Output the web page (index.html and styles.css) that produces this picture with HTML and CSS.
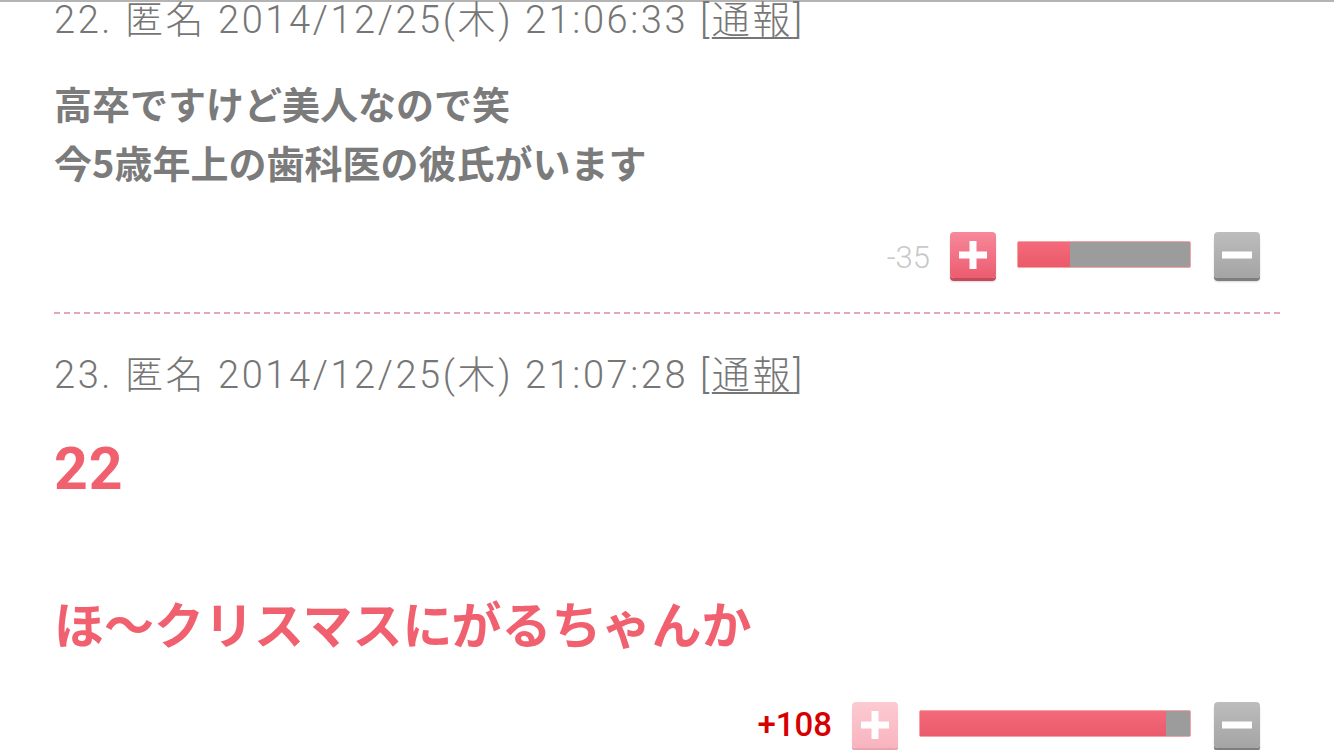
FILE: index.html
```html
<!DOCTYPE html>
<html lang="ja">
<head>
<meta charset="utf-8">
<title>コメント</title>
<link rel="stylesheet" href="styles.css">
</head>
<body>
<div class="topline"></div>
<div class="thread">
  <div class="comment">
    <div class="meta">22. 匿名 2014/12/25(木) 21:06:33 <span class="report">[<u>通報</u>]</span></div>
    <div class="body body-gray">高卒ですけど美人なので笑<br>今5歳年上の歯科医の彼氏がいます</div>
    <div class="vote">
      <span class="score score-minus">-35</span>
      <span class="btn btn-plus"><svg viewBox="0 0 30 30" width="30" height="30"><rect x="11.5" y="1" width="7" height="28" fill="#fff"/><rect x="1" y="11.5" width="28" height="7" fill="#fff"/></svg></span>
      <span class="bar" style="width:174px"><span class="fill" style="width:30%"></span></span>
      <span class="btn btn-minus"><svg viewBox="0 0 30 30" width="30" height="30"><rect x="0" y="11.5" width="30" height="7" fill="#fff"/></svg></span>
    </div>
  </div>
  <div class="comment">
    <div class="meta">23. 匿名 2014/12/25(木) 21:07:28 <span class="report">[<u>通報</u>]</span></div>
    <div class="body body-red"><span class="anchor">22</span><br><br>ほ〜クリスマスにがるちゃんか</div>
    <div class="vote">
      <span class="score score-plus">+108</span>
      <span class="btn btn-plus btn-voted"><svg viewBox="0 0 30 30" width="30" height="30"><rect x="11.5" y="1" width="7" height="28" fill="#fff"/><rect x="1" y="11.5" width="28" height="7" fill="#fff"/></svg></span>
      <span class="bar" style="width:272px"><span class="fill" style="width:91%"></span></span>
      <span class="btn btn-minus"><svg viewBox="0 0 30 30" width="30" height="30"><rect x="0" y="11.5" width="30" height="7" fill="#fff"/></svg></span>
    </div>
  </div>
</div>
</body>
</html>
```

FILE: styles.css
```css
html, body {
  margin: 0;
  padding: 0;
  background: #fff;
}
body {
  width: 1334px;
  height: 750px;
  overflow: hidden;
  font-family: "Noto Sans CJK JP", "Noto Sans", sans-serif;
}
.topline {
  height: 2px;
  background: #b4b4b4;
}
.thread {
  margin: 0 54px;
}
.comment {
  padding: 43px 0 32px;
  border-bottom: 2px dashed #e8a3c0;
}
.comment:first-child {
  padding-top: 0;
}
.meta {
  font-family: Roboto, "Noto Sans CJK JP", sans-serif;
  font-size: 38px;
  line-height: 36px;
  font-weight: 300;
  color: #767676;
  white-space: nowrap;
  letter-spacing: 2.6px;
}
.report u {
  text-decoration-thickness: 2px;
  text-underline-offset: 4px;
}
.body {
  margin-top: 36px;
  font-weight: 700;
  line-height: 1.55;
  white-space: nowrap;
}
.body-gray {
  font-size: 38px;
  color: #7b7b7b;
}
.body-red {
  font-size: 50px;
  color: #f0606f;
}
.anchor {
  font-family: Roboto, "Noto Sans CJK JP", sans-serif;
  font-size: 59px;
  line-height: 1;
  letter-spacing: 1px;
}
.vote {
  margin-top: 39px;
  display: flex;
  justify-content: flex-end;
  align-items: center;
  padding-right: 20px;
  height: 49px;
}
.score {
  margin-right: 20px;
  font-family: Roboto, "Noto Sans", sans-serif;
}
.score-minus {
  font-size: 31px;
  color: #c8c8c8;
  font-weight: 300;
  margin-top: 4px;
}
.score-plus {
  font-size: 33px;
  color: #d60000;
  font-weight: 500;
}
.btn {
  width: 46px;
  height: 46px;
  border-radius: 4px;
  display: flex;
  align-items: center;
  justify-content: center;
  box-sizing: border-box;
}
.btn-plus {
  background: linear-gradient(#f6899a, #ec5c6f);
  box-shadow: 0 3px 0 #c64a5c, 0 4px 2px rgba(0,0,0,0.15);
}
.btn-voted {
  background: linear-gradient(#fccbd2, #f8b4be);
  box-shadow: 0 3px 0 #e8a5b0, 0 4px 2px rgba(0,0,0,0.08);
}
.btn-minus {
  background: linear-gradient(#bdbdbd, #a4a4a4);
  box-shadow: 0 3px 0 #7e7e7e, 0 4px 2px rgba(0,0,0,0.15);
}
.bar {
  margin: 0 23px 0 21px;
  height: 27px;
  box-sizing: border-box;
  border: 1px solid #f4a4a4;
  border-radius: 2px;
  background: #9c9c9c;
  display: flex;
  overflow: hidden;
  margin-bottom: 2px;
}
.fill {
  height: 100%;
  background: linear-gradient(#f46a7a, #ea5a6b);
}
```
